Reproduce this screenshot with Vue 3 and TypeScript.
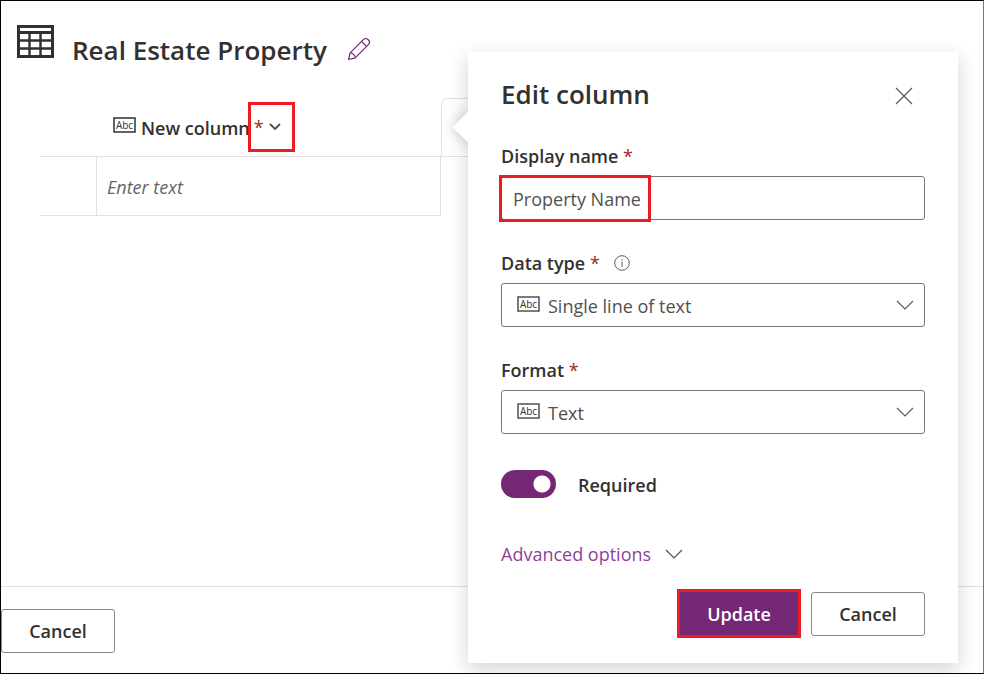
<script setup lang="ts">
import { ref } from 'vue'

interface ChoiceField {
  id: string
  label: string
  value: string
  info: boolean
}

const tableName = 'Real Estate Property'
const displayName = ref('Property Name')
const required = ref(true)
const choices = ref<ChoiceField[]>([
  { id: 'data-type', label: 'Data type', value: 'Single line of text', info: true },
  { id: 'format', label: 'Format', value: 'Text', info: false },
])
</script>

<template>
  <div class="page">
    <header class="page-header">
      <svg class="table-icon" width="37" height="36" viewBox="0 0 37 36" fill="none" stroke="#323130" aria-hidden="true">
        <path d="M1.500 3.500H35.500V33.500H1.500Z" stroke-width="3" />
        <path d="M1.500 9.500H35.500" stroke-width="3" />
        <path d="M1.500 17.500H35.500M1.500 25.500H35.500M12.500 9V34M23.500 9V34" stroke-width="2.400" />
      </svg>
      <h1>{{ tableName }}</h1>
      <button class="icon-button edit" aria-label="Edit table name">
        <svg width="24" height="24" viewBox="0 0 24 24" fill="none" stroke="#742774" stroke-width="1.200" stroke-linejoin="round">
          <path d="M1.500 22.500L3.200 15.800L16.600 2.400C19.500-.5 24.500 4.500 21.600 7.400L8.200 20.800Z" />
          <path d="M3.200 15.800C5.800 15.800 8.200 18.200 8.200 20.800M14.600 4.400L19.600 9.400" />
        </svg>
      </button>
    </header>

    <main class="content">
      <table class="grid">
        <thead>
          <tr>
            <td class="row-head"></td>
            <th scope="col">
              <div class="column-title">
                <svg class="abc" width="23" height="16" viewBox="0 0 23 16" aria-hidden="true">
                  <rect x="1" y="1" width="21" height="14" fill="#fff" stroke="#323130" stroke-width="1.500" />
                  <text x="11.500" y="12" text-anchor="middle">Abc</text>
                </svg>
                <span class="column-name">New column</span>
                <button class="column-menu" aria-label="Column options">
                  <span class="star">*</span>
                  <svg width="12" height="8" viewBox="0 0 12 8" fill="none" stroke="#505050" stroke-width="1.800">
                    <path d="M1 1L6 6L11 1" />
                  </svg>
                </button>
              </div>
            </th>
            <td class="next-column"></td>
          </tr>
        </thead>
        <tbody>
          <tr>
            <td class="row-head"></td>
            <td class="entry"><input type="text" placeholder="Enter text" aria-label="New column value" /></td>
            <td></td>
          </tr>
        </tbody>
      </table>
    </main>

    <footer class="page-footer">
      <button class="button">Cancel</button>
    </footer>

    <section class="callout" role="dialog" aria-labelledby="callout-title">
      <div class="callout-body">
        <div class="callout-header">
          <h2 id="callout-title">Edit column</h2>
          <button class="icon-button close" aria-label="Close">
            <svg width="18" height="18" viewBox="0 0 18 18" fill="none" stroke="#605e5c" stroke-width="1.300">
              <path d="M1 1L17 17M17 1L1 17" />
            </svg>
          </button>
        </div>

        <div class="field">
          <div class="label-row"><label for="display-name">Display name <span class="star">*</span></label></div>
          <div class="control">
            <input id="display-name" v-model="displayName" type="text" />
            <span class="highlight"></span>
          </div>
        </div>

        <div v-for="field in choices" :key="field.id" class="field">
          <div class="label-row">
            <label :for="field.id">{{ field.label }} <span class="star">*</span></label>
            <svg v-if="field.info" width="16" height="16" viewBox="0 0 16 16" fill="none" stroke="#605e5c" aria-hidden="true">
              <circle cx="8" cy="8" r="7.300" />
              <path d="M8 6.500V12M8 4V5.300" />
            </svg>
          </div>
          <div class="control stack">
            <select :id="field.id" v-model="field.value">
              <option>{{ field.value }}</option>
            </select>
            <svg class="abc" width="23" height="16" viewBox="0 0 23 16" aria-hidden="true">
              <rect x="1" y="1" width="21" height="14" fill="#fff" stroke="#505050" stroke-width="1.500" />
              <text x="11.500" y="12" text-anchor="middle">Abc</text>
            </svg>
            <svg class="chevron" width="18" height="10" viewBox="0 0 18 10" fill="none" stroke="#605e5c" stroke-width="1.200">
              <path d="M1 1L9 9L17 1" />
            </svg>
          </div>
        </div>

        <label class="toggle">
          <input v-model="required" type="checkbox" role="switch" />
          <span>Required</span>
        </label>

        <button class="advanced">
          <span>Advanced options</span>
          <svg width="18" height="10" viewBox="0 0 18 10" fill="none" stroke="#505050" stroke-width="1.200">
            <path d="M1 1L9 9L17 1" />
          </svg>
        </button>

        <div class="actions">
          <button class="button primary">Update</button>
          <button class="button">Cancel</button>
        </div>
      </div>
    </section>
  </div>
</template>

<style>
body {
  background: #fff;
}
</style>

<style scoped>
* {
  box-sizing: border-box;
}

.page {
  position: relative;
  display: flex;
  flex-direction: column;
  min-height: 100vh;
  border: 1px solid #000;
  border-right-color: #777;
  overflow: hidden;
  color: #323130;
  font-family: 'Open Sans', 'Noto Sans', sans-serif;
  font-size: 18px;
  line-height: 24px;
}

button,
input,
select {
  font: inherit;
  color: inherit;
  margin: 0;
}

h1,
h2 {
  margin: 0;
  font-size: 26px;
  line-height: 36px;
  font-weight: 600;
}

.page-header {
  display: flex;
  align-items: flex-start;
  padding: 22px 16px 0;
}

.page-header h1 {
  margin: 9px 20px 0 18px;
}

.icon-button {
  display: flex;
  padding: 0;
  border: 0;
  background: none;
}

.edit {
  margin-top: 14px;
}

.star {
  color: #a4262c;
  font-weight: 400;
}

.abc {
  font-size: 10px;
  font-weight: 400;
  fill: #323130;
}

.content {
  flex: 1;
  padding: 30px 0 0 39px;
}

.grid {
  table-layout: fixed;
  width: 457px;
  border-collapse: separate;
  border-spacing: 0;
}

.grid th,
.grid td {
  height: 59px;
  padding: 0;
  font-weight: 600;
  text-align: left;
}

.grid .row-head {
  width: 56px;
  border-bottom: 1px solid #e1e1e1;
}

.grid th {
  width: 345px;
  border-bottom: 1px solid #e1e1e1;
}

.grid .next-column {
  border: 1px solid #e1e1e1;
  border-right: 0;
  border-top-left-radius: 6px;
}

.grid .entry {
  border: 1px solid #e1e1e1;
  border-top: 0;
}

.entry input {
  width: 100%;
  padding: 10px 10px 8px;
  border: 0;
  background: none;
  outline: 0;
}

.entry input::placeholder {
  color: #666;
  font-style: italic;
  font-weight: 400;
  opacity: 1;
}

.column-title {
  display: flex;
  align-items: center;
  padding-left: 17px;
}

.column-title .abc {
  margin: 0 5px 4px 0;
}

.column-name {
  padding-top: 2px;
}

.column-menu {
  display: flex;
  align-items: center;
  gap: 5px;
  width: 47px;
  height: 50px;
  margin-left: -2px;
  padding: 0 0 0 3px;
  border: 3px solid #ec1c24;
  background: #fff;
}

.page-footer {
  padding: 22px 0 20px;
  border-top: 1px solid #e1e1e1;
}

.button {
  min-width: 114px;
  height: 44px;
  padding: 0 20px;
  border: 1px solid #8a8886;
  border-radius: 3px;
  background: #fff;
  font-weight: 600;
}

.callout {
  position: absolute;
  top: 51px;
  right: 25px;
  width: 490px;
  border-radius: 2px;
  background: #fff;
  box-shadow: 0 6px 20px rgba(0, 0, 0, 0.18);
}

.callout::before {
  content: '';
  position: absolute;
  top: 64px;
  left: -11px;
  width: 22px;
  height: 22px;
  background: #fff;
  box-shadow: 0 0 14px rgba(0, 0, 0, 0.22);
  transform: rotate(45deg);
}

.callout-body {
  position: relative;
  display: flex;
  flex-direction: column;
  padding: 24px 33px 25px;
  background: #fff;
}

.callout-header {
  display: flex;
  align-items: center;
  justify-content: space-between;
  padding-right: 12px;
  margin-bottom: 32px;
}

.close {
  padding-top: 4px;
}

.field {
  margin-bottom: 31px;
}

.label-row {
  display: flex;
  align-items: center;
  gap: 14px;
  margin-bottom: 8px;
  font-weight: 600;
}

.control {
  position: relative;
  color: #505050;
}

.control input,
.control select {
  display: block;
  width: 100%;
  height: 44px;
  padding: 2px 11px 0;
  border: 1px solid #797775;
  border-radius: 3px;
  background: #fff;
  appearance: none;
  outline: 0;
}

.highlight {
  position: absolute;
  top: -1px;
  left: -2px;
  width: 152px;
  height: 47px;
  border: 3px solid #ec1c24;
  pointer-events: none;
}

.stack {
  display: grid;
  align-items: center;
}

.stack > * {
  grid-area: 1 / 1;
}

.control select {
  padding: 2px 46px 0;
}

.stack svg {
  pointer-events: none;
}

.stack .abc {
  margin: 0 0 2px 16px;
}

.chevron {
  justify-self: end;
  margin-right: 11px;
}

.toggle {
  display: flex;
  align-items: center;
  gap: 22px;
  margin-top: 5px;
  font-weight: 600;
}

.toggle input {
  width: 55px;
  height: 28px;
  border-radius: 14px;
  background: #ccc;
  appearance: none;
}

.toggle input:checked {
  background: radial-gradient(circle at 41px 14px, #fff 8px, #742774 9px);
}

.toggle span {
  padding-top: 2px;
}

.advanced {
  display: flex;
  align-items: center;
  align-self: flex-start;
  gap: 14px;
  margin-top: 44px;
  padding: 0;
  border: 0;
  background: none;
  color: #8f3f97;
}

.actions {
  display: flex;
  align-items: center;
  justify-content: flex-end;
  gap: 10px;
  margin-top: 23px;
}

.primary {
  width: 124px;
  height: 49px;
  border: 3px solid #ec1c24;
  border-radius: 0;
  background: #742774;
  color: #fff;
}
</style>
